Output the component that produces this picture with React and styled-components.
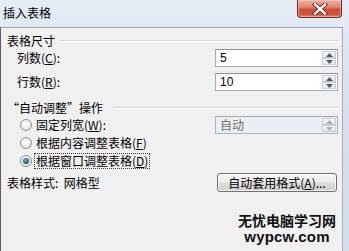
import React from "react";
import styled, { createGlobalStyle } from "styled-components";

const Global = createGlobalStyle`
  html, body { margin: 0; padding: 0; overflow: hidden; background: #d9e4ef; }
  body { font-family: "Noto Sans CJK SC", "Liberation Sans", sans-serif; }
  * { box-sizing: border-box; }
`;

const Window = styled.div`
  width: 349px;
  height: 251px;
  display: flex;
  flex-direction: column;
  background: linear-gradient(180deg, #e4ecf5 0%, #d6e1ed 40%, #d3deea 100%);
  overflow: hidden;
`;

const TitleBar = styled.div`
  height: 27px;
  flex-shrink: 0;
  display: flex;
  justify-content: space-between;
  align-items: flex-start;
`;

const Title = styled.div`
  font-size: 12px;
  line-height: 26px;
  padding-left: 3px;
  color: #000;
`;

const CloseButton = styled.div`
  width: 45px;
  height: 18px;
  margin-right: 7px;
  border: 1px solid #7a2a1e;
  border-top: none;
  border-radius: 0 0 4px 4px;
  background: linear-gradient(180deg, #eab0a2 0%, #e08a74 40%, #cf4f36 55%, #cc563e 85%, #dc8a72 100%);
  box-shadow: inset 0 0 0 1px rgba(255, 220, 210, 0.45);
  display: flex;
  align-items: center;
  justify-content: center;
`;

const Body = styled.div`
  flex: 1;
  display: flex;
`;

const Content = styled.div`
  width: 343px;
  background: #f0f0f0;
  border-left: 1px solid #5c5c5c;
  border-top: 1px solid #98a6b4;
  border-right: 1px solid #a3aeb9;
  padding-top: 5px;
  display: flex;
  flex-direction: column;
  font-size: 12px;
  color: #000;
`;

const GroupHeader = styled.div`
  height: 16px;
  display: flex;
  align-items: center;
  padding-left: 6px;
  margin-top: ${(p) => p.$top || 0}px;
  line-height: 16px;
`;

const HeaderLine = styled.div`
  flex: 1;
  margin-left: ${(p) => p.$gap || 6}px;
  margin-right: 4px;
  border-top: 1px solid #d5d5d5;
  border-bottom: 1px solid #ffffff;
`;

const FieldRow = styled.div`
  height: 18px;
  display: flex;
  align-items: center;
  padding-left: 16px;
  margin-top: ${(p) => p.$top || 0}px;
`;

const Label = styled.span`
  flex: 1;
  line-height: 16px;
  white-space: nowrap;
`;

const Key = styled.span`
  text-decoration: underline;
`;

const SpinBox = styled.div`
  width: 123px;
  height: 18px;
  margin-right: 4px;
  border: 1px solid ${(p) => (p.$disabled ? "#a9b6c4" : "#a5acb5")};
  border-top-color: ${(p) => (p.$disabled ? "#9aa9b8" : "#8e959e")};
  background: ${(p) => (p.$disabled ? "#eceff2" : "#ffffff")};
  display: flex;
  align-items: stretch;
  padding: 1px;
`;

const SpinText = styled.div`
  flex: 1;
  padding-left: 3px;
  font-family: ${(p) => (p.$cjk ? '"Noto Sans CJK SC", sans-serif' : '"Liberation Sans", Arial, sans-serif')};
  font-size: 12px;
  line-height: 14px;
  color: ${(p) => (p.$disabled ? "#6d6d6d" : "#000")};
`;

const SpinButtons = styled.div`
  width: 14px;
  display: flex;
  flex-direction: column;
`;

const SpinHalf = styled.div`
  flex: 1;
  border: 1px solid #c9ced4;
  background: linear-gradient(180deg, #f7f7f7, #e3e6ea);
  display: flex;
  align-items: center;
  justify-content: center;
`;

const RadioRow = styled.div`
  height: 18px;
  display: flex;
  align-items: center;
  padding-left: 19px;
`;

const RadioCircle = styled.span`
  width: 12px;
  height: 12px;
  border-radius: 50%;
  border: 1px solid #8e8f8f;
  background: radial-gradient(circle at 45% 40%, #ffffff 0%, #f2f2f2 40%, #d4d4d4 100%);
  display: inline-flex;
  align-items: center;
  justify-content: center;
  flex-shrink: 0;
  &::after {
    content: "";
    display: ${(p) => (p.$checked ? "block" : "none")};
    width: 6px;
    height: 6px;
    border-radius: 50%;
    background: radial-gradient(circle at 40% 35%, #6fb7d6 0%, #2a6a8a 50%, #173f55 100%);
  }
`;

const RadioText = styled.span`
  margin-left: 2px;
  padding: 0 1px;
  line-height: 14px;
  border: 1px dotted ${(p) => (p.$focus ? "#333" : "transparent")};
  white-space: nowrap;
`;

const RadioLabelWrap = styled.div`
  flex: 1;
  display: flex;
  align-items: center;
`;

const StyleRow = styled.div`
  height: 19px;
  margin-top: 3px;
  display: flex;
  align-items: center;
  padding-left: 6px;
`;

const PushButton = styled.div`
  width: 120px;
  height: 19px;
  margin-right: 5px;
  border: 1px solid #707070;
  border-radius: 3px;
  background: linear-gradient(180deg, #f4f4f4 0%, #ebebeb 48%, #dddddd 52%, #cfcfcf 100%);
  box-shadow: inset 0 0 0 1px rgba(255, 255, 255, 0.7);
  text-align: center;
  font-size: 12px;
  line-height: 17px;
  white-space: nowrap;
`;

const Watermark = styled.div`
  align-self: flex-end;
  margin-top: 22px;
  margin-right: 3px;
  width: 104px;
  display: flex;
  flex-direction: column;
  align-items: center;
  gap: 2px;
  font-weight: 700;
  color: #111;
  font-family: "Liberation Sans", "Noto Sans CJK SC", sans-serif;
`;

const WmLine = styled.div`
  font-size: ${(p) => p.$size}px;
  height: 14px;
  line-height: 14px;
  white-space: nowrap;
  letter-spacing: ${(p) => (p.$latin ? "0.2px" : "0")};
`;

const RightFrame = styled.div`
  flex: 1;
`;

const Arrow = ({ up, color = "#4d5a66" }) => (
  <svg width="7" height="4" viewBox="0 0 7 4">
    {up ? <polygon points="0,4 7,4 3.5,0" fill={color} /> : <polygon points="0,0 7,0 3.5,4" fill={color} />}
  </svg>
);

const Spin = ({ value, disabled, cjk }) => (
  <SpinBox $disabled={disabled}>
    <SpinText $disabled={disabled} $cjk={cjk}>{value}</SpinText>
    <SpinButtons>
      <SpinHalf><Arrow up color={disabled ? "#a7b0b8" : "#4d5a66"} /></SpinHalf>
      <SpinHalf><Arrow color={disabled ? "#a7b0b8" : "#4d5a66"} /></SpinHalf>
    </SpinButtons>
  </SpinBox>
);

const CloseGlyph = () => (
  <svg width="16" height="12" viewBox="0 0 16 12">
    <path d="M3 1.5 L13 10.5 M13 1.5 L3 10.5" stroke="#6a1f14" strokeWidth="4.2" strokeLinecap="square" />
    <path d="M3 1.5 L13 10.5 M13 1.5 L3 10.5" stroke="#ffffff" strokeWidth="2.4" strokeLinecap="square" />
  </svg>
);

export default function App() {
  return (
    <>
      <Global />
      <Window>
        <TitleBar>
          <Title>插入表格</Title>
          <CloseButton><CloseGlyph /></CloseButton>
        </TitleBar>
        <Body>
          <Content>
            <GroupHeader>
              <span>表格尺寸</span>
              <HeaderLine $gap={6} />
            </GroupHeader>
            <FieldRow>
              <Label>列数(<Key>C</Key>):</Label>
              <Spin value="5" />
            </FieldRow>
            <FieldRow $top={6}>
              <Label>行数(<Key>R</Key>):</Label>
              <Spin value="10" />
            </FieldRow>
            <GroupHeader $top={9}>
              <span>“自动调整”操作</span>
              <HeaderLine $gap={10} />
            </GroupHeader>
            <RadioRow>
              <RadioLabelWrap>
                <RadioCircle />
                <RadioText>固定列宽(<Key>W</Key>):</RadioText>
              </RadioLabelWrap>
              <Spin value="自动" disabled cjk />
            </RadioRow>
            <RadioRow>
              <RadioCircle />
              <RadioText>根据内容调整表格(<Key>F</Key>)</RadioText>
            </RadioRow>
            <RadioRow>
              <RadioCircle $checked />
              <RadioText $focus>根据窗口调整表格(<Key>D</Key>)</RadioText>
            </RadioRow>
            <StyleRow>
              <Label>表格样式:&nbsp;&nbsp;网格型</Label>
              <PushButton>自动套用格式(<Key>A</Key>)...</PushButton>
            </StyleRow>
            <Watermark>
              <WmLine $size={14}>无忧电脑学习网</WmLine>
              <WmLine $size={15} $latin>wypcw.com</WmLine>
            </Watermark>
          </Content>
          <RightFrame />
        </Body>
      </Window>
    </>
  );
}
